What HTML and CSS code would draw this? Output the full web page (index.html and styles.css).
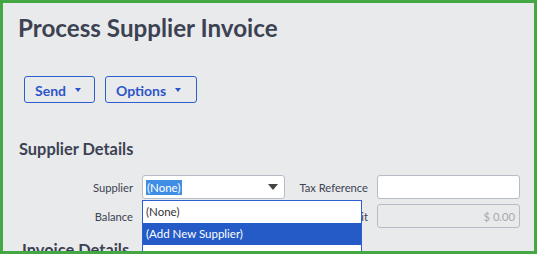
FILE: index.html
```html
<!DOCTYPE html>
<html>
<head>
<meta charset="utf-8">
<link rel="stylesheet" href="styles.css">
</head>
<body>
<div class="frame">
  <h1 class="title">Process Supplier Invoice</h1>
  <div class="toolbar">
    <button class="btn btn-send">Send <span class="caret"></span></button>
    <button class="btn btn-options">Options <span class="caret"></span></button>
  </div>
  <h2 class="section">Supplier Details</h2>
  <div class="form">
    <label class="lbl">Supplier</label>
    <div class="select"><span class="sel-text">(None)</span><span class="sel-arrow"></span></div>
    <label class="lbl">Tax Reference</label>
    <div class="input"></div>
    <label class="lbl">Balance</label>
    <div class="spacer"></div>
    <label class="lbl">Credit Limit</label>
    <div class="input disabled">$ 0.00</div>
    <div class="dropdown">
      <div class="opt">(None)</div>
      <div class="opt active">(Add New Supplier)</div>
      <div class="opt"></div>
    </div>
  </div>
  <h2 class="section section2">Invoice Details</h2>
</div>
</body>
</html>
```
FILE: styles.css
```css
* { box-sizing: border-box; }
html, body { margin: 0; padding: 0; }
body {
  font-family: Lato, "Open Sans", sans-serif;
  background: #e9eaec;
}
.frame {
  width: 537px;
  height: 254px;
  border: 3px solid #43a843;
  background: #e9eaec;
  overflow: hidden;
  padding: 0 0 0 15px;
}
.title {
  margin: 10px 0 0 0;
  font-size: 24.2px;
  line-height: 30px;
  font-weight: 700;
  color: #3c4252;
}
.toolbar {
  display: flex;
  gap: 10px;
  margin: 33px 0 0 6px;
}
.btn {
  height: 27px;
  border: 1px solid #2d5fd0;
  border-radius: 3px;
  background: transparent;
  color: #2d55c8;
  font-family: Lato, sans-serif;
  font-weight: 700;
  font-size: 14px;
  padding: 1px 0 0 10px;
  display: flex;
  align-items: center;
  gap: 9px;
  margin: 0;
}
.btn-send { width: 71px; }
.btn-options { width: 92px; }
.caret {
  width: 0; height: 0;
  border-left: 3.5px solid transparent;
  border-right: 3.5px solid transparent;
  border-top: 4px solid #2d55c8;
}
.section {
  margin: 36px 0 0 1px;
  font-size: 16.4px;
  line-height: 20px;
  font-weight: 700;
  color: #3c4252;
}
.form {
  position: relative;
  display: grid;
  grid-template-columns: 116px 143px 76px 143px;
  column-gap: 8px;
  row-gap: 5px;
  grid-auto-rows: 24px;
  margin-top: 16px;
  font-size: 11.2px;
  color: #3c4252;
}
.lbl {
  display: flex;
  align-items: center;
  justify-content: flex-end;
  padding-right: 1px;
}
.select {
  background: #fff;
  border: 1px solid #b8bcc6;
  border-radius: 3px;
  display: flex;
  align-items: center;
  justify-content: space-between;
  padding: 0 6px 0 3px;
  font-size: 11.5px;
}
.sel-text {
  background: #3f8ee6;
  color: #fff;
  line-height: 15px;
  padding: 0 1px;
}
.sel-arrow {
  width: 0; height: 0;
  border-left: 5px solid transparent;
  border-right: 5px solid transparent;
  border-top: 6px solid #444;
}
.input {
  background: #fff;
  border: 1px solid #b8bcc6;
  border-radius: 3px;
}
.input.disabled {
  background: #e9eaec;
  color: #a6a9b0;
  display: flex;
  align-items: center;
  justify-content: flex-end;
  padding-right: 4px;
}
.dropdown {
  position: absolute;
  left: 124px;
  top: 25px;
  width: 220px;
  background: #fff;
  border: 1px solid #2d5fd0;
  font-size: 11.5px;
  color: #333;
}
.opt {
  height: 22px;
  line-height: 22px;
  padding-left: 3px;
}
.opt.active {
  background: #245bc6;
  color: #fff;
}
.section2 { margin: 12px 0 0 4px; }
```
